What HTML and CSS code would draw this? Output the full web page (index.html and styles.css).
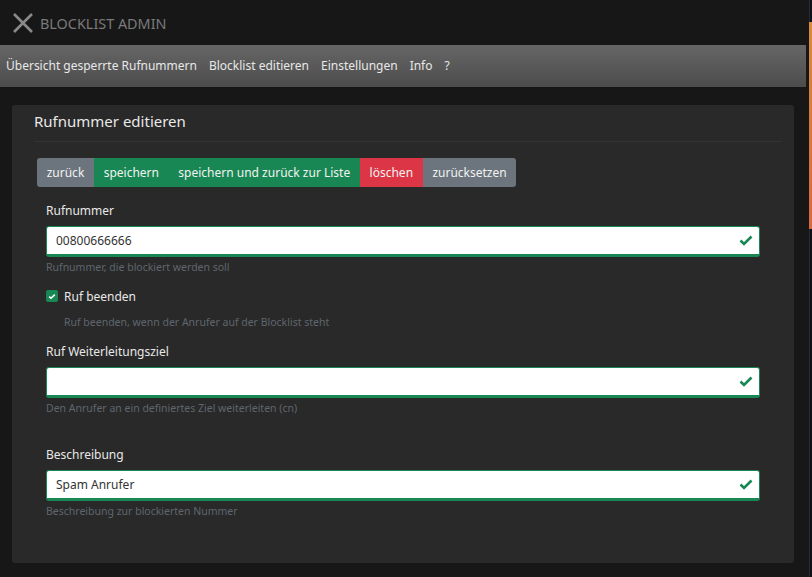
FILE: index.html
```html
<!DOCTYPE html>
<html lang="de">
<head>
<meta charset="utf-8">
<title>Blocklist Admin</title>
<link rel="stylesheet" href="styles.css">
</head>
<body>
<div class="app">
  <header class="topbar">
    <svg class="logo" width="22" height="22" viewBox="0 0 22 22"><path d="M2 2 L20 20 M20 2 L2 20" stroke="#8a8a8a" stroke-width="2.6" fill="none"/></svg>
    <span class="brand">BLOCKLIST ADMIN</span>
  </header>
  <nav class="menu">
    <a>Übersicht gesperrte Rufnummern</a>
    <a>Blocklist editieren</a>
    <a>Einstellungen</a>
    <a>Info</a>
    <a>?</a>
  </nav>
  <main class="content">
    <section class="card">
      <h1 class="card-title">Rufnummer editieren</h1>
      <div class="btn-group">
        <span class="btn grey">zurück</span>
        <span class="btn green">speichern</span>
        <span class="btn green">speichern und zurück zur Liste</span>
        <span class="btn red">löschen</span>
        <span class="btn grey">zurücksetzen</span>
      </div>
      <div class="field">
        <label class="label">Rufnummer</label>
        <div class="input"><span>00800666666</span><svg class="check" width="14" height="11" viewBox="0 0 14 11"><path d="M1.5 5.5 L5 9 L12.5 1.5" stroke="#198754" stroke-width="2.6" fill="none"/></svg></div>
        <small class="help">Rufnummer, die blockiert werden soll</small>
      </div>
      <div class="checkfield">
        <div class="checkline">
          <span class="box"><svg width="8" height="7" viewBox="0 0 8 7"><path d="M1.2 3.6 L3 5.3 L6.8 1.6" stroke="#fff" stroke-width="1.5" fill="none"/></svg></span>
          <span class="checklabel">Ruf beenden</span>
        </div>
        <small class="help indent">Ruf beenden, wenn der Anrufer auf der Blocklist steht</small>
      </div>
      <div class="field second">
        <label class="label">Ruf Weiterleitungsziel</label>
        <div class="input"><span></span><svg class="check" width="14" height="11" viewBox="0 0 14 11"><path d="M1.5 5.5 L5 9 L12.5 1.5" stroke="#198754" stroke-width="2.6" fill="none"/></svg></div>
        <small class="help">Den Anrufer an ein definiertes Ziel weiterleiten (cn)</small>
      </div>
      <div class="field third">
        <label class="label">Beschreibung</label>
        <div class="input"><span>Spam Anrufer</span><svg class="check" width="14" height="11" viewBox="0 0 14 11"><path d="M1.5 5.5 L5 9 L12.5 1.5" stroke="#198754" stroke-width="2.6" fill="none"/></svg></div>
        <small class="help">Beschreibung zur blockierten Nummer</small>
      </div>
    </section>
  </main>
</div>
<div class="edge"><div class="edge-orange"></div></div>
</body>
</html>
```
FILE: styles.css
```css
* { box-sizing: border-box; }
html, body { margin: 0; height: 100%; }
body {
  display: flex;
  height: 577px;
  overflow: hidden;
  background: #171717;
  font-family: "Noto Sans", sans-serif;
  font-size: 12px;
  color: #e8e8e8;
}
.app { width: 806px; flex: none; }
.topbar { height: 45px; display: flex; align-items: center; padding-left: 12px; gap: 6px; }
.logo { flex: none; }
.brand { font-size: 14.4px; color: #7a7a7a; padding-top: 1px; }
.menu {
  height: 42px;
  display: flex;
  align-items: center;
  gap: 12px;
  padding: 0 0 2px 6px;
  background: linear-gradient(#666666, #4c4c4c);
  color: #e8e8e8;
}
.content { padding: 18px 12px 0; }
.card {
  width: 782px;
  height: 458px;
  background: #292929;
  border-radius: 3px;
  padding: 0 24px;
}
.card-title {
  margin: 0 -12px 16px -2px;
  padding-top: 6px;
  font-size: 15px;
  font-weight: 400;
  line-height: 21px;
  height: 37px;
  border-bottom: 1px solid #333;
  color: #e8e8e8;
}
.btn-group { display: flex; margin-left: 1px; width: max-content; height: 29px; border-radius: 3px; overflow: hidden; }
.btn { padding: 0 9.7px; line-height: 29px; color: #f2f2f2; }
.grey { background: #6c757d; }
.green { background: #198754; }
.red { background: #dc3545; }
.field { margin: 15px 0 0 10px; width: 714px; }
.label { display: block; line-height: 17px; margin-bottom: 7px; }
.input {
  height: 31px;
  background: #fff;
  border: 1px solid #198754;
  border-bottom-width: 3px;
  border-radius: 3px;
  display: flex;
  align-items: center;
  justify-content: space-between;
  padding: 0 6px 0 9px;
  color: #333;
}
.check { flex: none; }
.help { display: block; font-size: 10.5px; line-height: 14px; color: #5f666d; margin-top: 3px; }
.checkfield { margin: 13px 0 0 10px; }
.checkline { display: flex; align-items: center; gap: 6px; height: 18px; }
.box { width: 12px; height: 12px; background: #198754; border-radius: 2px; display: flex; align-items: center; justify-content: center; }
.checklabel { color: #e8e8e8; }
.indent { margin-left: 18px; margin-top: 10px; }
.second { margin-top: 14px; }
.third { margin-top: 31px; }
.edge { flex: 1; position: relative; }
.edge::before { content: ""; position: absolute; left: 3px; top: 0; bottom: 0; width: 3px; background: #0e1018; border-left: 1px solid #2a2a38; }
.edge-orange { position: absolute; z-index: 1; left: 3px; top: 22px; width: 3px; height: 207px; background: linear-gradient(#d98a3a, #d9683f); }
```
